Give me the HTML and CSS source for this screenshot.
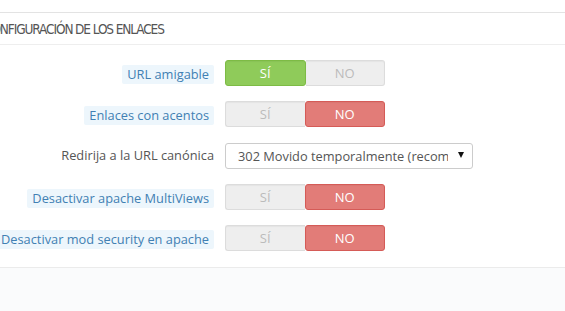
FILE: index.html
```html
<!DOCTYPE html>
<html lang="es">
<head>
<meta charset="utf-8">
<title>Configuración de los enlaces</title>
<link rel="stylesheet" href="styles.css">
</head>
<body>
<div class="panel">
  <h3 class="panel-heading"><span class="heading-text">Configuración de los enlaces</span></h3>
  <div class="form">
    <div class="row">
      <div class="label-col"><span class="hint">URL amigable</span></div>
      <div class="switch">
        <span class="opt yes-on">Sí</span><span class="opt">No</span>
      </div>
    </div>
    <div class="row">
      <div class="label-col"><span class="hint">Enlaces con acentos</span></div>
      <div class="switch">
        <span class="opt">Sí</span><span class="opt no-on">No</span>
      </div>
    </div>
    <div class="row">
      <div class="label-col"><span class="plain">Redirija a la URL canónica</span></div>
      <div class="select-wrap">
        <select class="select">
          <option>302 Movido temporalmente (recomendado)</option>
          <option>301 Movido permanentemente</option>
          <option>No redireccionar</option>
        </select>
      </div>
    </div>
    <div class="row">
      <div class="label-col"><span class="hint">Desactivar apache MultiViews</span></div>
      <div class="switch">
        <span class="opt">Sí</span><span class="opt no-on">No</span>
      </div>
    </div>
    <div class="row">
      <div class="label-col"><span class="hint">Desactivar mod security en apache</span></div>
      <div class="switch">
        <span class="opt">Sí</span><span class="opt no-on">No</span>
      </div>
    </div>
  </div>
  <div class="panel-footer"></div>
</div>
</body>
</html>
```

FILE: styles.css
```css
html, body {
  margin: 0;
  padding: 0;
  background: #ffffff;
  height: 100%;
  overflow: hidden;
}

body {
  font-family: "Open Sans", "Liberation Sans", sans-serif;
  font-size: 12.8px;
  color: #555555;
}

.panel {
  margin-top: 12px;
  border-top: 1px solid #e3e3e3;
  display: flex;
  flex-direction: column;
  height: calc(100% - 13px);
}

.panel-heading {
  margin: 0;
  height: 31px;
  border-bottom: 1px solid #eeeeee;
  display: flex;
  align-items: center;
  overflow: hidden;
  font-family: "DejaVu Sans Condensed", "DejaVu Sans", sans-serif;
  font-stretch: condensed;
  font-weight: normal;
  font-size: 13.5px;
  letter-spacing: -1.1px;
  text-transform: uppercase;
  color: #555555;
  white-space: nowrap;
}

.heading-text {
  margin-left: -16px;
}

.form {
  padding: 15px 0 16px 0;
  display: flex;
  flex-direction: column;
  gap: 15.25px;
}

.row {
  display: flex;
  align-items: center;
  height: 26px;
}

.label-col {
  width: 214px;
  display: flex;
  justify-content: flex-end;
  margin-right: 11px;
  white-space: nowrap;
}

.hint {
  background: #edf6fc;
  color: #4180b3;
  padding: 0 5px;
  line-height: 19px;
  border-radius: 2px;
  margin-top: 3px;
}

.plain {
  color: #555555;
  line-height: 19px;
}

.switch {
  display: flex;
  width: 160px;
  height: 26px;
}

.opt {
  flex: 1;
  box-sizing: border-box;
  display: flex;
  align-items: center;
  justify-content: center;
  text-transform: uppercase;
  font-size: 13px;
  background: #eeeeee;
  color: #bbbbbb;
  border: 1px solid #dcdcdc;
  box-shadow: inset 0 1px 1px rgba(0,0,0,0.04);
}

.opt:first-child {
  border-radius: 3px 0 0 3px;
  border-right: none;
}

.opt:last-child {
  border-radius: 0 3px 3px 0;
  border-left: none;
}

.opt.yes-on {
  background: #8fcb5a;
  border: 1px solid #7dbb45;
  color: #ffffff;
  border-radius: 3px;
}

.opt.no-on {
  background: #e27c78;
  border: 1px solid #d55b57;
  color: #ffffff;
  border-radius: 3px;
}

.select-wrap {
  position: relative;
  width: 248px;
  height: 26px;
}

.select {
  -webkit-appearance: none;
  appearance: none;
  width: 100%;
  height: 26px;
  box-sizing: border-box;
  border: 1px solid #cccccc;
  border-radius: 3px;
  background: #ffffff;
  padding: 0 24px 0 12px;
  font-family: "Open Sans", "Liberation Sans", sans-serif;
  font-size: 12.8px;
  color: #555555;
  outline: none;
}

.select-wrap::after {
  content: "";
  position: absolute;
  right: 9px;
  top: 9px;
  border-left: 3.5px solid transparent;
  border-right: 3.5px solid transparent;
  border-top: 6px solid #111111;
  pointer-events: none;
}

.panel-footer {
  flex: 1;
  background: #fafbfc;
  border-top: 1px solid #ebebeb;
}
```
